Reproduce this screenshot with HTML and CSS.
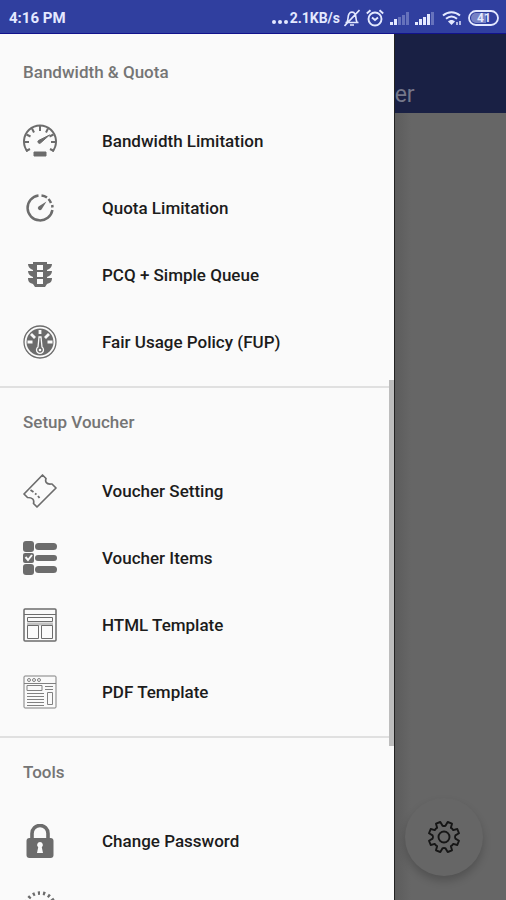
FILE: index.html
```html
<!DOCTYPE html>
<html lang="en">
<head>
<meta charset="utf-8">
<meta name="viewport" content="width=device-width, initial-scale=1">
<title>Navigation drawer</title>
<link rel="stylesheet" href="styles.css">
</head>
<body>
<header class="status">
  <span class="clock">4:16 PM</span>
  <div class="indicators">
    <span class="dots"><i></i><i></i><i></i></span>
    <span class="rate">2.1KB/s</span>
    <svg class="bell" width="16" height="18" viewBox="0 0 16 18" fill="none" stroke="currentColor" stroke-width="1.6"><path d="M1.500 13.500h13M3 13c1.500-2 .5-5.500 2-8C6.300 2.500 9.700 2.500 11 5c1.500 2.500.5 6 2 8M6 16h4M15.500 1 .5 17"/></svg>
    <svg class="alarm" width="18" height="18" viewBox="0 0 18 18" fill="none" stroke="currentColor" stroke-width="1.9"><circle cx="9" cy="10" r="6.500"/><path d="M.8 4.500 4.500 1.200M17.200 4.500 13.500 1.200M6 8.500 9 11l3-2.500"/></svg>
    <svg class="signal" width="19" height="16" viewBox="0 0 19 16" fill="currentColor"><path d="M0 12h3v3H0zM4 9h3v6H4z"/><path opacity=".3" d="M8 7h3v8H8zM12 5h3v10h-3zM16 2h3v13h-3z"/></svg>
    <svg class="signal" width="19" height="16" viewBox="0 0 19 16" fill="currentColor"><path d="M0 12h3v3H0zM4 9h3v6H4zM8 7h3v8H8zM12 4h3v11h-3z"/><path opacity=".3" d="M16 2h3v13h-3z"/></svg>
    <svg class="wifi" width="20" height="16" viewBox="0 0 20 16" fill="none" stroke="currentColor" stroke-width="2"><path d="M1 5.500c5-4.500 12-4.500 17 0M4 8.800c3.500-3 7.500-3 11 0"/><path d="M6 11.500c2-2 5-2 7 0l-3.500 3.500z" fill="currentColor" stroke="none"/><path d="M15 15v-3M18 15v-4" stroke-width="1.800" opacity=".8"/></svg>
    <svg class="battery" width="32" height="16" viewBox="0 0 32 16" fill="none" stroke="currentColor"><rect x="1" y="1" width="29" height="14" rx="7" stroke-width="1.800"/><path d="M8 3h10v10H8A5 5 0 0 1 8 3z" fill="currentColor" opacity=".4" stroke="none"/><text x="9" y="12" class="level">41</text></svg>
  </div>
</header>
<div class="screen">
  <nav class="drawer">
    <section class="group">
      <h2>Bandwidth &amp; Quota</h2>
      <ul>
        <li><a href="#bandwidth">
          <svg viewBox="0 0 34 34" fill="none" stroke="currentColor"><path d="M4.500 27.500A16 16 0 1 1 29.500 27.500" stroke-width="2"/><path d="M17 2v5M9 4.500l2 4M25 4.500l-2 4M3.500 10.500l4 2M30.500 10.500l-4 2M1 18h5M33 18h-5M3 27l4-2M31 27l-4-2" stroke-width="2"/><path d="m15.500 16.500 11-5.500-9 8a1.500 1.500 0 0 1-2-2.500zM11 28h12v4H11z" fill="currentColor" stroke-width="1"/></svg>
          <span>Bandwidth Limitation</span></a></li>
        <li><a href="#quota">
          <svg viewBox="0 0 34 34" fill="none" stroke="currentColor"><path d="M15.500 4.500A12.500 12.500 0 1 0 29.400 19" stroke-width="2.500"/><path d="M18.500 4.500a12.500 12.500 0 0 1 5.500 2M25.500 8a12 12 0 0 1 2.500 4M29.200 14l.3 2.500" stroke-width="2.500"/><path d="m15.500 15.500 8-5-5 8a2 2 0 1 1-3-3z" fill="currentColor" stroke="none"/></svg>
          <span>Quota Limitation</span></a></li>
        <li><a href="#pcq">
          <svg viewBox="0 0 34 34" fill="currentColor"><path fill-rule="evenodd" d="M10 4h14v2h5c0 3-2 5-5 6v1h5c0 3-2 5-5 6v1h5c0 4-2 5-5 6l-2 3H12l-2-3c-3-1-5-2-5-6h5v-1c-3-1-5-3-5-6h5v-1c-3-1-5-3-5-6h5zM14 7v5h6V7zM14 14v5h6v-5zM14 21v5h6v-5z"/></svg>
          <span>PCQ + Simple Queue</span></a></li>
        <li><a href="#fup">
          <svg viewBox="0 0 34 34" fill="none" stroke="currentColor"><circle cx="17" cy="17" r="16" stroke-width="1.300"/><circle cx="17" cy="17" r="13.500" fill="currentColor" stroke="none"/><path d="M17 5v4M8 9l4 4M26 9l-4 4M4.500 17h5M29.500 17h-5" stroke="#fafafa" stroke-width="2.800"/><path d="m16 12-1 10a3.500 3.500 0 1 0 4 0l-1-10z" stroke="#fafafa" stroke-width="1.300"/><circle cx="17" cy="25" r="1.300" fill="#fafafa" stroke="none"/></svg>
          <span>Fair Usage Policy (FUP)</span></a></li>
      </ul>
    </section>
    <section class="group">
      <h2>Setup Voucher</h2>
      <ul>
        <li><a href="#voucher-setting">
          <svg viewBox="0 0 34 34" fill="none" stroke="currentColor" stroke-width="1.700" stroke-linejoin="round"><path d="M19.500 1 23 4.500c-1 3 0 6 5 5.500h1l4 4-19 19-3.500-3.500c1-4-1-6-6-6L1 20z"/><path d="m7.500 16 3 2m1.500 1.500 1.500 1M15 22l1.500 2" stroke-width="1.800"/></svg>
          <span>Voucher Setting</span></a></li>
        <li><a href="#voucher-items">
          <svg viewBox="0 0 34 34" fill="currentColor"><rect y="0" width="11" height="11" rx="3"/><rect y="12" width="11" height="10" rx="2"/><rect y="23" width="11" height="11" rx="3"/><rect x="12" y="2" width="22" height="7" rx="3.500"/><rect x="12" y="14" width="22" height="6" rx="3"/><rect x="12" y="25" width="22" height="7" rx="3.500"/><path d="m2.500 16 2.500 3 4-5" fill="none" stroke="#fafafa" stroke-width="2"/></svg>
          <span>Voucher Items</span></a></li>
        <li><a href="#html-template">
          <svg viewBox="0 0 34 34" fill="none" stroke="currentColor" stroke-width="1"><rect x="1" y="1" width="32" height="32" rx="1" stroke-width="1.500"/><path d="M1 6.500h32M4.500 9.500h25v4h-25zM4.500 17.500h11v13h-11zM18.500 17.500h11v13h-11z"/><path d="M4 16h26" opacity=".4" stroke-width="3"/></svg>
          <span>HTML Template</span></a></li>
        <li><a href="#pdf-template">
          <svg viewBox="0 0 34 34" fill="none" stroke="currentColor" stroke-width="1" opacity=".85"><rect x="1" y="1" width="32" height="32" rx="1"/><path d="M1 8.500h32M4 10.500h15v5H4zM24.500 17.500h5v12h-5zM22 11.500h8M22 14.500h8M4 18.500h17M4 21.500h17M4 24.500h17M4 27.500h17M4 30.500h17"/><circle cx="6" cy="5" r="1.500"/><circle cx="11" cy="5" r="1.500"/><circle cx="16" cy="5" r="1.500"/></svg>
          <span>PDF Template</span></a></li>
      </ul>
    </section>
    <section class="group">
      <h2>Tools</h2>
      <ul>
        <li><a href="#password">
          <svg viewBox="0 0 34 34" fill="none" stroke="currentColor"><path d="M9 16V9.500a8 8 0 0 1 16 0V16" stroke-width="3.600"/><rect x="3.500" y="14" width="27" height="20" rx="3" fill="currentColor" stroke="none"/><path d="M17 18a3 3 0 0 1 1.800 5.300L20 29h-6l1.200-5.700A3 3 0 0 1 17 18z" fill="#fafafa" stroke="none"/></svg>
          <span>Change Password</span></a></li>
        <li><a href="#more" aria-label="More tools">
          <svg viewBox="0 0 34 34" fill="none" stroke="currentColor"><circle cx="17" cy="17" r="15" stroke-width="3.500" stroke-dasharray="2.200 3.036"/></svg></a></li>
      </ul>
    </section>
    <div class="thumb"></div>
  </nav>
  <main class="page">
    <h1>er</h1>
    <button class="fab" aria-label="Settings">
      <svg viewBox="-17 -17 34 34" fill="none" stroke="currentColor" stroke-width="1.900" stroke-linejoin="round"><path d="M1.600-11.400 3.700-15 8-13.300 6.900-9.200Q8.500-8.500 9.200-6.900L13.300-8 15-3.700 11.400-1.600Q10.600 0 11.400 1.600L15 3.700 13.300 8 9.200 6.900Q8.500 8.500 6.900 9.200L8 13.300 3.700 15 1.600 11.400Q0 10.600-1.600 11.400L-3.700 15-8 13.300-6.900 9.200Q-8.500 8.500-9.200 6.900L-13.300 8-15 3.700-11.400 1.600Q-10.600 0-11.400-1.600L-15-3.700-13.300-8-9.200-6.900Q-8.500-8.500-6.900-9.200L-8-13.300-3.700-15-1.600-11.400Q0-10.600 1.600-11.400z"/><circle r="5.500"/></svg>
    </button>
  </main>
</div>
</body>
</html>
```
FILE: styles.css
```css
* {
  box-sizing: border-box;
}

body {
  margin: 0;
  height: 100vh;
  display: flex;
  flex-direction: column;
  overflow: hidden;
  background: #666;
  font-family: Roboto, "Liberation Sans", sans-serif;
}

.status {
  flex: none;
  height: 34px;
  padding: 2px 6px 0 9px;
  display: flex;
  align-items: center;
  justify-content: space-between;
  background: #303f9f;
  border-bottom: 1px solid #12128c;
  color: #e4e9ff;
  font-size: 15px;
  font-weight: 700;
}

.indicators {
  display: flex;
  align-items: center;
  gap: 6px;
}

.dots {
  display: flex;
  gap: 2px;
  padding-top: 8px;
}

.dots i {
  width: 4px;
  height: 4px;
  border-radius: 50%;
  background: currentColor;
}

.rate {
  font-size: 14px;
  margin-left: -4px;
}

.rate + .bell {
  margin-left: -2px;
}

.wifi {
  margin-left: 2px;
}

.level {
  fill: currentColor;
  stroke: none;
  font-size: 12px;
}

.screen {
  flex: 1;
  min-height: 0;
  display: flex;
}

.drawer {
  position: relative;
  flex: none;
  width: 78%;
  padding-top: 4px;
  overflow: hidden;
  background: #fafafa;
  border-right: 1px solid #222;
}

.group {
  padding-bottom: 11px;
  border-bottom: 2px solid #e0e0e0;
}

.group h2 {
  margin: 0;
  padding-left: 23px;
  color: #757575;
  font-size: 17px;
  font-weight: 500;
  line-height: 69px;
}

.group ul {
  margin: 0;
  padding: 0;
  list-style: none;
}

.group a {
  height: 67px;
  padding-left: 23px;
  display: flex;
  align-items: center;
  gap: 45px;
  color: #1c1c1c;
  font-size: 17px;
  font-weight: 500;
  text-decoration: none;
}

.group svg {
  flex: none;
  width: 34px;
  height: 34px;
  color: #6c6c6c;
}

.thumb {
  position: absolute;
  top: 346px;
  right: 0;
  width: 5px;
  height: 366px;
  background: #bdbdbd;
}

.page {
  position: relative;
  flex: 1;
  background: linear-gradient(90deg, #5c5c5c, #666 16px);
}

.page h1 {
  margin: 0;
  height: 79px;
  padding-top: 45px;
  background: #192044;
  color: #74778a;
  font-size: 23px;
  font-weight: 400;
  line-height: 32px;
}

.fab {
  position: absolute;
  right: 23px;
  bottom: 24px;
  width: 78px;
  height: 78px;
  padding: 0;
  display: grid;
  place-items: center;
  border: 0;
  border-radius: 50%;
  background: #666;
  color: #161616;
  box-shadow: 0 5px 8px rgba(0, 0, 0, 0.2);
}

.fab svg {
  width: 34px;
  height: 34px;
}
```
